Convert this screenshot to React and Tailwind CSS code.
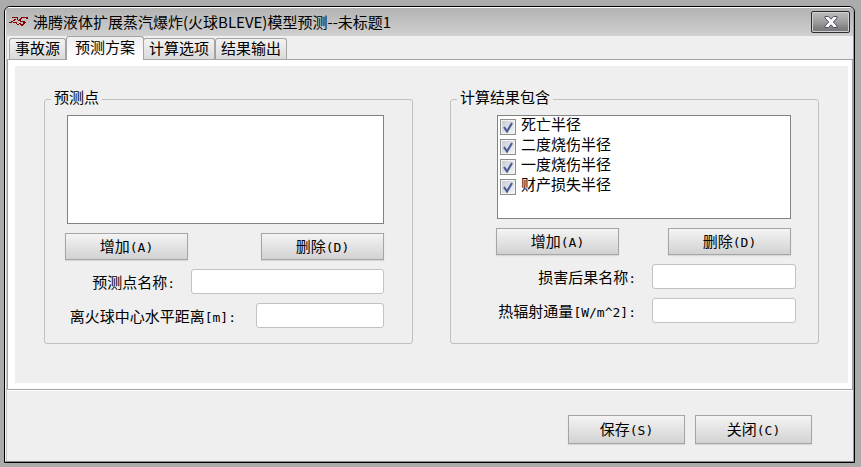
import { useState } from 'react'
import clsx from 'clsx'

const TABS = ['事故源', '预测方案', '计算选项', '结果输出']
const RESULTS = ['死亡半径', '二度烧伤半径', '一度烧伤半径', '财产损失半径']

function Latin({ children }) {
  return <span className="font-['DejaVu_Sans_Mono',monospace] text-[13px]">{children}</span>
}

function Logo() {
  return (
    <svg width="20" height="12" viewBox="0 0 20 12" fill="none" stroke="#8b0000" shapeRendering="crispEdges" aria-hidden="true">
      <path d="M3 1.500h6M8.500 2v2M0 6.500h3M2 5.500h2M4 4.500h2M5 3.500h2M4 6.500h4M7.500 6v2M8 8.500h2" />
      <path d="M12 1.500h7M17 2.500h2M11 2.500h2M10 3.500h2M9 4.500h3M11 5.500h5M14 6.500h3M14 7.500h2M11 8.500h4M12 9.500h2M10 7.500h2" />
    </svg>
  )
}

function CloseIcon() {
  return (
    <svg width="14" height="12" viewBox="0 0 14 12" aria-hidden="true">
      <path d="M1 .5h3.500L7 3.200 9.500.5H13V2L9.300 6 13 10v1.500H9.500L7 8.800 4.500 11.500H1V10l3.700-4L1 2z" fill="#fafafa" stroke="#50506a" />
    </svg>
  )
}

function PushButton({ text, hotkey, className }) {
  return (
    <button type="button" className={clsx('flex items-center justify-center border border-[#a5a5a5] bg-linear-to-b from-[#f4f4f4] to-[#d2d2d2] leading-5 shadow-[0_1px_1px_#d8d8d8] active:to-[#c0c0c0]', className)}>
      <span>{text}<Latin>({hotkey})</Latin></span>
    </button>
  )
}

function Field({ id, label, unit = '', className, labelClass }) {
  return (
    <div className="flex items-center justify-end">
      <label htmlFor={id} className={clsx('pt-0.5 whitespace-nowrap leading-5', labelClass)}>{label}<Latin>{unit}:</Latin></label>
      <input id={id} type="text" className={clsx('h-[25px] min-w-0 rounded-[3px] border border-[#c2c2c2] bg-white px-1 outline-none', className)} />
    </div>
  )
}

function CheckRow({ label }) {
  const [checked, setChecked] = useState(true)
  return (
    <label className="flex h-5 items-start">
      <span className="relative mt-[3px] mr-[5px] size-4">
        <input type="checkbox" checked={checked} onChange={e => setChecked(e.target.checked)}
          className="block size-4 appearance-none border border-[#8e8f8f] bg-linear-to-br from-[#c6cbd2] to-[#f6f6f6] shadow-[inset_0_0_0_1px_#f4f4f4]" />
        {checked && (
          <svg className="pointer-events-none absolute inset-0" width="16" height="16" viewBox="0 0 16 16" fill="none" aria-hidden="true">
            <path d="M4 8l3 4.500L12 4" stroke="#4a5f97" strokeWidth="2.200" />
          </svg>
        )}
      </span>
      <span className="leading-4">{label}</span>
    </label>
  )
}

function Group({ title, children }) {
  return (
    <fieldset className="min-w-0 flex-1 rounded-[3px] border border-[#c0c0c0]">
      <legend className="ml-1.5 px-[3px] pb-1 leading-5">{title}</legend>
      {children}
    </fieldset>
  )
}

export default function App() {
  const [tab, setTab] = useState(1)

  return (
    <div className="min-h-screen bg-[#ababab] pt-1.5 pr-1.5 pb-1 pl-1 font-['Noto_Sans_CJK_SC',sans-serif] text-[15px] text-black">
      <div className="overflow-hidden rounded-t-[6px] border border-black bg-[#efefef]">
        <div className="rounded-t-[5px] border border-t-white border-r-[#9a9a9a] border-b-[#8c8c8c] border-l-[#f4f4f4]">
          <header className="flex h-7 items-center bg-linear-to-b from-[#b3b3b3] to-[#d0d0d0] pr-[3px] pl-[3px]">
            <Logo />
            <h1 className="ml-1 flex-1 truncate leading-6">沸腾液体扩展蒸汽爆炸(火球BLEVE)模型预测--未标题1</h1>
            <button type="button" aria-label="关闭窗口"
              className="flex h-[22px] w-[39px] items-center justify-center rounded-[2px] border border-[#2e2e2e] bg-linear-to-b from-[#bcbcbc] from-0% via-[#a2a2a2] via-45% to-[#a6a6a6] shadow-[inset_0_0_0_1px_#cfcfcf,inset_0_-10px_5px_-3px_#7c7c7c]">
              <CloseIcon />
            </button>
          </header>

          <div className="border-l border-[#c9c9c9]">
            <nav role="tablist" className="flex h-[23px] items-end pl-0.5">
              {TABS.map((t, i) => (
                <button key={t} type="button" role="tab" aria-selected={i === tab} onClick={() => setTab(i)}
                  className={clsx('rounded-t-[3px] border border-b-0 border-[#a3a3a3] whitespace-nowrap',
                    i === tab
                      ? 'relative -mr-px -mb-px h-6 bg-linear-to-b from-[#efefef] to-white px-2 pb-1 leading-[19px]'
                      : 'h-[21px] bg-linear-to-b from-[#f3f3f3] to-[#dadada] px-[5px] pb-0.5 leading-[18px]')}>
                  {t}
                </button>
              ))}
            </nav>

            <main className="border border-[#a3a3a3] bg-white py-[6px] pr-1 pl-[7px] shadow-[0_1px_0_#fff]">
              <div className="flex items-stretch gap-[37px] bg-[#efefef] px-[29px] pt-[21px] pb-[39px]">
                <Group title="预测点">
                  <div className="flex flex-col gap-[9px] pt-1 pr-7 pb-[15px] pl-5">
                    <ul className="ml-0.5 h-[109px] border border-[#828282] bg-white" aria-label="预测点" />
                    <div className="flex justify-between gap-2">
                      <PushButton text="增加" hotkey="A" className="h-[27px] w-[123px]" />
                      <PushButton text="删除" hotkey="D" className="h-[27px] w-[123px]" />
                    </div>
                    <Field id="point-name" label="预测点名称" labelClass="mr-4" className="w-[193px]" />
                    <Field id="distance" label="离火球中心水平距离" unit="[m]" labelClass="mr-5" className="w-32" />
                  </div>
                </Group>

                <Group title="计算结果包含">
                  <div className="flex flex-col gap-[9px] pt-1 pr-[22px] pb-[15px] pl-[45px]">
                    <div className="mr-[5px] ml-px h-[104px] border border-[#828282] bg-white pl-0.5">
                      {RESULTS.map(r => <CheckRow key={r} label={r} />)}
                    </div>
                    <div className="mr-[5px] flex justify-between gap-2">
                      <PushButton text="增加" hotkey="A" className="h-[27px] w-[123px]" />
                      <PushButton text="删除" hotkey="D" className="h-[27px] w-[123px]" />
                    </div>
                    <Field id="damage-name" label="损害后果名称" labelClass="mr-4" className="w-36" />
                    <Field id="heat-flux" label="热辐射通量" unit="[W/m^2]" labelClass="mr-4" className="w-36" />
                  </div>
                </Group>
              </div>
            </main>

            <footer className="flex justify-end gap-2.5 pt-[25px] pr-[41px] pb-[17px]">
              <PushButton text="保存" hotkey="S" className="h-[29px] w-[117px]" />
              <PushButton text="关闭" hotkey="C" className="h-[29px] w-[117px]" />
            </footer>
          </div>
        </div>
      </div>
    </div>
  )
}
